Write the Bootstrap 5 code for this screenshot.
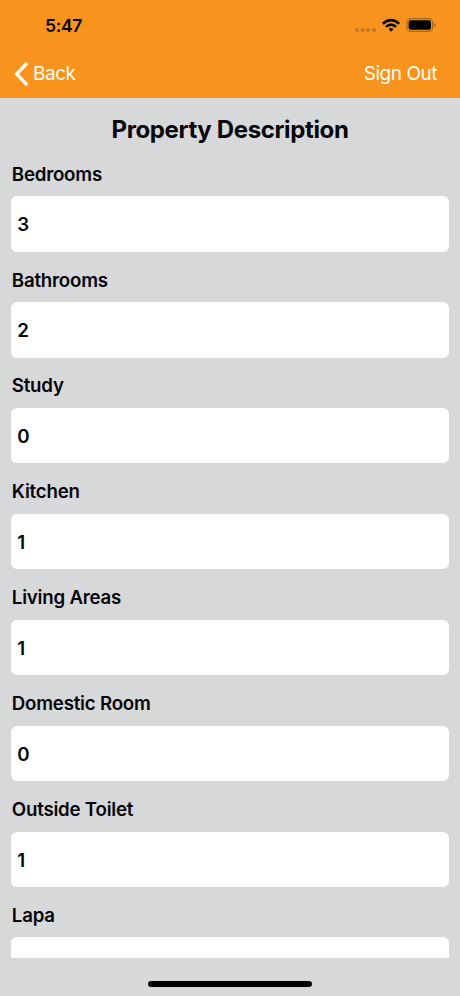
<!DOCTYPE html>
<html lang="en">
<head>
<meta charset="utf-8">
<meta name="viewport" content="width=device-width, initial-scale=1">
<title>Property Description</title>
<link href="https://cdn.jsdelivr.net/npm/bootstrap@5.3.0/dist/css/bootstrap.min.css" rel="stylesheet">
<style>
  body { background: #d7d8da; color: #050507; font-family: Inter, "Liberation Sans", sans-serif; height: 996px; }
  .app-header { background: #f8941d; height: 98px; }
  .status-bar { height: 50px; padding: 1px 24px 0 45px; }
  .clock { font-size: 17.5px; font-weight: 600; line-height: 1; letter-spacing: -.3px; }
  .nav-row { height: 48px; padding: 0 23px 0 14px; }
  .nav-row a { color: #fffdf3; font-size: 19px; letter-spacing: -.47px; line-height: 24px; }
  .page-title { font-size: 24px; font-weight: 700; height: 54px; padding-top: 17px; letter-spacing: -.36px; line-height: 29px; }
  .form-area { height: 860px; padding: 0 11.3px; }
  .field-group { height: 105.9px; }
  .field-group label { height: 44.2px; font-size: 18.7px; font-weight: 600; letter-spacing: -.22px; padding: 1.2px 0 0 .5px; }
  .field-group .form-control { height: 55.5px; border-radius: 6px; padding: 2px 6px 0; font-size: 18.7px; font-weight: 600; color: #050507; }
  .home-bar { width: 164px; height: 6px; background: #000; margin-top: 23px; }
</style>
</head>
<body class="overflow-hidden">
<header class="app-header">
  <div class="status-bar d-flex align-items-center justify-content-between">
    <span class="clock">5:47</span>
    <svg width="82" height="18" viewBox="0 0 82 18" aria-hidden="true">
      <g fill="#c17821"><circle cx="3" cy="13" r="2"/><circle cx="8.7" cy="13" r="2"/><circle cx="14.3" cy="13" r="2"/><circle cx="20" cy="13" r="2"/></g>
      <g fill="none" stroke="#000" stroke-width="2.6"><path d="M28.8 6.8Q37 -.6 45.2 6.8"/><path d="M31.9 9.9Q37 5.3 42.1 9.9"/></g>
      <path d="M34.5 12.1Q37 10.1 39.5 12.1L37 14.7Z"/>
      <rect x="53" y="1.6" width="25.6" height="12.8" rx="3.8" fill="none" stroke="#a96819" stroke-width="1.2"/>
      <rect x="54.6" y="3.2" width="22.4" height="9.6" rx="2.3"/>
      <path d="M79.9 5.7Q81.6 6.6 81.6 8T79.9 10.3Z" fill="#a96819"/>
    </svg>
  </div>
  <nav class="nav-row d-flex align-items-center justify-content-between">
    <a href="#" class="d-flex align-items-center text-decoration-none">
      <svg class="me-1" width="15" height="24" viewBox="0 0 15 24" fill="none" stroke="#fffdf3" stroke-width="3.4" stroke-linecap="round" stroke-linejoin="miter" aria-hidden="true"><path d="M12.2 2L2.7 12L12.2 22"/></svg>
      Back
    </a>
    <a href="#" class="text-decoration-none">Sign Out</a>
  </nav>
</header>
<main class="form-area overflow-hidden">
  <h1 class="page-title text-center mb-0">Property Description</h1>
  <form>
    <div class="field-group"><label class="d-flex align-items-center" for="bedrooms">Bedrooms</label><input class="form-control border-0" id="bedrooms" value="3"></div>
    <div class="field-group"><label class="d-flex align-items-center" for="bathrooms">Bathrooms</label><input class="form-control border-0" id="bathrooms" value="2"></div>
    <div class="field-group"><label class="d-flex align-items-center" for="study">Study</label><input class="form-control border-0" id="study" value="0"></div>
    <div class="field-group"><label class="d-flex align-items-center" for="kitchen">Kitchen</label><input class="form-control border-0" id="kitchen" value="1"></div>
    <div class="field-group"><label class="d-flex align-items-center" for="living">Living Areas</label><input class="form-control border-0" id="living" value="1"></div>
    <div class="field-group"><label class="d-flex align-items-center" for="domestic">Domestic Room</label><input class="form-control border-0" id="domestic" value="0"></div>
    <div class="field-group"><label class="d-flex align-items-center" for="toilet">Outside Toilet</label><input class="form-control border-0" id="toilet" value="1"></div>
    <div class="field-group"><label class="d-flex align-items-center" for="lapa">Lapa</label><input class="form-control border-0" id="lapa"></div>
  </form>
</main>
<div class="home-bar rounded-pill mx-auto"></div>
<script src="https://cdn.jsdelivr.net/npm/bootstrap@5.3.0/dist/js/bootstrap.bundle.min.js"></script>
</body>
</html>
